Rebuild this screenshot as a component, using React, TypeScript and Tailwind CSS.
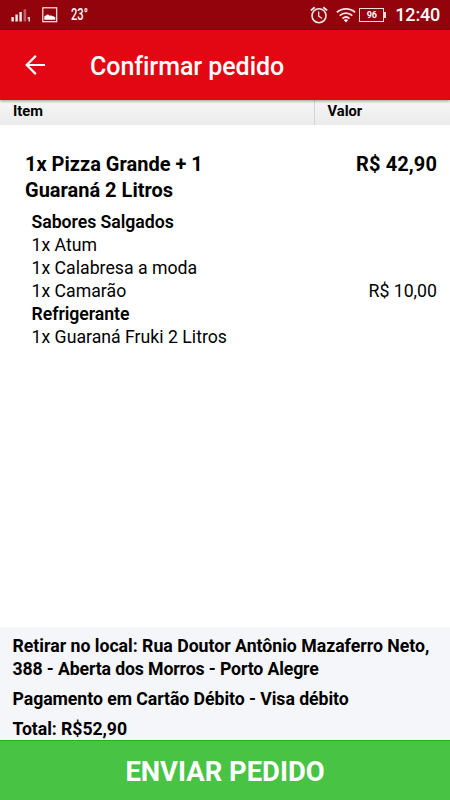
import React from 'react';

interface OrderLine {
  label: string;
  value?: string;
  heading?: boolean;
}

const lines: OrderLine[] = [
  { label: 'Sabores Salgados', heading: true },
  { label: '1x Atum' },
  { label: '1x Calabresa a moda' },
  { label: '1x Camarão', value: 'R$ 10,00' },
  { label: 'Refrigerante', heading: true },
  { label: '1x Guaraná Fruki 2 Litros' },
];

const StatusBar: React.FC = () => (
  <div className="flex h-[30px] shrink-0 items-center bg-[#93030c] text-white">
    <svg className="ml-[11px] h-[14px] w-5" viewBox="0 0 20 14" fill="#f9eced">
      <rect x="0.4" y="9" width="2.4" height="4.500" />
      <rect x="4.4" y="6.500" width="2.4" height="7" />
      <rect x="8.4" y="4" width="2.4" height="9.500" />
      <rect x="12.6" y="1.3" width="2.6" height="12.200" opacity="0.4" />
      <path d="M16.600 9.6 18 9h.9v4.500h-1.400v-3l-.9.3z" />
    </svg>
    <svg className="ml-[11px] h-4 w-4" viewBox="0 0 16 16">
      <rect x="0.800" y="0.800" width="13.900" height="13.900" fill="none" stroke="#fbeeee" strokeWidth="1.2" />
      <path d="M2.3 12.800v-3.200c.8-.7 1.500-1.400 2.300-1.700 1-.6 2.200-.3 3 .9 1.200-.6 2.300-.5 3.100.4 1.100-.1 1.900.5 2.600 1.300v2.300z" fill="#fff" />
    </svg>
    <div className="ml-[13px] w-6 origin-left scale-x-[0.7] whitespace-nowrap font-['Roboto',sans-serif] text-[16px] leading-[30px] font-medium">
      23°
    </div>
    <svg className="ml-auto h-[18px] w-[18px]" viewBox="0 0 18 18" fill="none" stroke="#f8e8e9" strokeWidth="1.6">
      <circle cx="9" cy="9.700" r="7" />
      <path d="M.9 4.500 4.700 1.200M17.100 4.500 13.300 1.200" strokeWidth="1.800" />
      <path d="M8.700 5.600v4.600l3.400 2.100" strokeWidth="1.300" />
    </svg>
    <svg className="ml-[8px] h-[16px] w-5" viewBox="0 0 20 16" fill="none" stroke="#f8e8e9" strokeWidth="1.800">
      <path d="M.9 5.400c5.200-4.700 13-4.700 18.200 0M3.700 8.600c3.700-3.300 8.900-3.300 12.600 0M6.500 11.600c2.100-1.900 4.900-1.900 7 0" />
      <path d="M7.800 13.100c1.300-1 3.100-1 4.400 0L10 15.600z" fill="#fff" stroke="none" />
    </svg>
    <div className="ml-[3px] flex items-center">
      <div className="flex h-[14px] w-[25px] items-center justify-center border border-[#f4dcdd] font-['Roboto',sans-serif] text-[9px] leading-none font-bold">
        96
      </div>
      <div className="h-[6px] w-[2px] bg-[#f4dcdd]" />
    </div>
    <div className="mr-[10px] ml-[9px] font-['Roboto',sans-serif] text-[18px] leading-[30px] tracking-[-0.2px] font-medium">
      12:40
    </div>
  </div>
);

const App: React.FC = () => {
  return (
    <div className="flex h-[800px] w-[450px] flex-col overflow-hidden bg-white font-['Roboto',sans-serif] text-black">
      <StatusBar />

      <header className="z-10 flex h-[70px] shrink-0 items-center bg-[#e30613] text-white shadow-[0_1px_3px_rgba(0,0,0,0.4)]">
        <svg className="ml-[25px] h-5 w-5" viewBox="0 0 20 20" fill="none" stroke="#fff" strokeWidth="2.2">
          <path d="M20 10H2M10.800 .9 1.700 10l9.100 9.100" />
        </svg>
        <h1 className="ml-[45px] pt-[3px] text-[25px] leading-8 tracking-[-0.05px] font-medium">Confirmar pedido</h1>
      </header>

      <div className="flex h-[25px] shrink-0 bg-linear-to-b from-[#f6f6f6] to-[#ebebeb] text-[14.700px] leading-[23px] font-bold">
        <div className="w-[315px] border-r border-[#d3d3dc] pl-[13px]">Item</div>
        <div className="pl-[12.500px]">Valor</div>
      </div>

      <main className="grow pt-[26px] pr-[13px] pl-[25px]">
        <div className="flex justify-between text-[20px] leading-[26px] font-bold">
          <div className="w-[200px]">1x Pizza Grande + 1 Guaraná 2 Litros</div>
          <div className="tracking-[0.1px]">R$ 42,90</div>
        </div>
        <ul className="mt-[8px] pl-[6.500px] text-[17.700px] leading-[22.900px]">
          {lines.map((line) => (
            <li key={line.label} className="flex justify-between">
              <span className={line.heading ? 'font-semibold tracking-[-0.05px]' : ''}>{line.label}</span>
              {line.value && <span>{line.value}</span>}
            </li>
          ))}
        </ul>
      </main>

      <section className="h-[113px] shrink-0 bg-[#f5f6f9] px-[12.500px] pt-[8px] text-[17.700px] leading-[23px] font-bold">
        <p className="whitespace-nowrap">
          <span className="tracking-[-0.01px]">Retirar no local: Rua Doutor Antônio Mazaferro Neto,</span>
          <br />
          <span className="tracking-[-0.13px]">388 - Aberta dos Morros - Porto Alegre</span>
        </p>
        <p className="mt-[7px] tracking-[-0.06px]">Pagamento em Cartão Débito - Visa débito</p>
        <p className="mt-[7px] tracking-[-0.06px]">Total: R$52,90</p>
      </section>

      <button className="h-[60px] shrink-0 border-t border-[#16b81b] bg-[#48c344] pt-[4px] text-[27.400px] leading-[55px] font-bold text-white">
        ENVIAR PEDIDO
      </button>
    </div>
  );
};

export default App;
